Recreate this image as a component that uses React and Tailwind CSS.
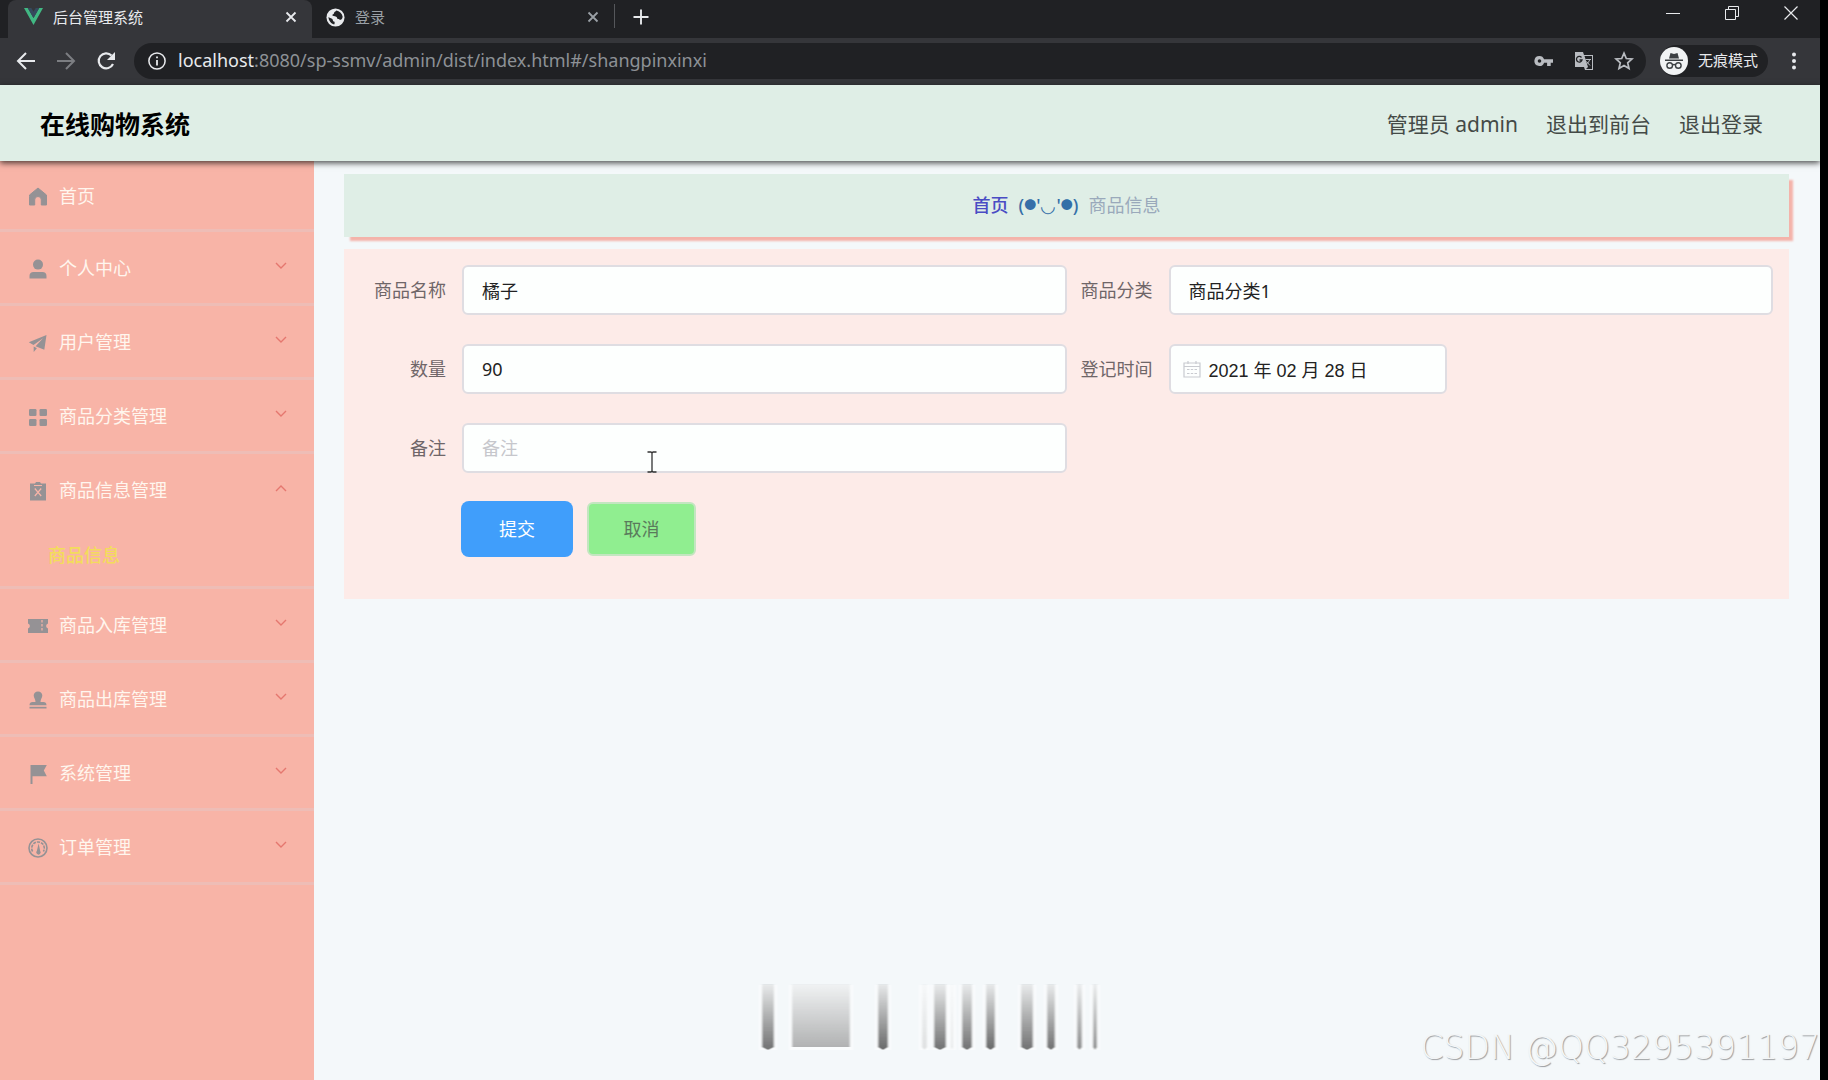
import React from "react";

const Icon = ({ children, className = "size-5", view = "0 0 20 20" }) => (
  <svg viewBox={view} className={`shrink-0 ${className}`} fill="currentColor" aria-hidden="true">
    {children}
  </svg>
);

const icons = {
  home: <path d="M10 2 1.500 9v1.500V19h5.200v-5.200a3.300 3.300 0 0 1 6.600 0V19h5.200V9z" stroke="currentColor" strokeWidth="1" strokeLinejoin="round" />,
  user: (
    <>
      <circle cx="10" cy="5.600" r="5" />
      <path d="M1.500 19.500v-2.500c0-2.500 1.500-4 4-4h9c2.500 0 4 1.500 4 4v2.500z" />
    </>
  ),
  send: (
    <>
      <path d="M18.500 2 .8 9.300l4.700 2.600L15 5.300l-7.400 8 8.700 3.400z" />
      <path d="M5.700 13.500v5.600l3.200-3.900z" />
    </>
  ),
  grid: (
    <>
      <rect x="1" y="2" width="7.500" height="7" rx="1.200" />
      <rect x="11.500" y="2" width="7.500" height="7" rx="1.200" />
      <rect x="1" y="12" width="7.500" height="7" rx="1.200" />
      <rect x="11.500" y="12" width="7.500" height="7" rx="1.200" />
    </>
  ),
  clip: (
    <>
      <path d="M2 2.500h5L8 1h4l1 1.500h5V19.500H2z" />
      <path d="m6.800 7.500 6.400 7.500m0-7.500L6.800 15M6 4.500h8" stroke="#f8b4a7" strokeWidth="1.200" fill="none" />
    </>
  ),
  ticket: (
    <>
      <path d="M0 3h20v4.500a2.600 2.600 0 0 0 0 5V17H0v-4.500a2.600 2.600 0 0 0 0-5z" />
      <path d="M14 4v12" stroke="#f8b4a7" strokeWidth="1.200" strokeDasharray="2.500 1.500" />
    </>
  ),
  stamp: (
    <>
      <path d="M10 1.500c2.700 0 4.300 1.900 4.300 4.100 0 2.300-1.800 3.600-1.800 6.400h3c1.800 0 3 1.100 3 3.200h-17c0-2.100 1.200-3.200 3-3.200h3c0-2.800-1.800-4.100-1.800-6.400 0-2.200 1.600-4.100 4.300-4.100z" />
      <rect x="1.500" y="16.800" width="17" height="1.700" />
    </>
  ),
  flag: <path d="M2.500 1h16.300l-3 5.500 3 5.800H4.500V20h-2z" />,
  gauge: (
    <>
      <circle cx="10" cy="10" r="9" fill="none" stroke="currentColor" strokeWidth="1.600" />
      <path d="M4.600 13.500a6.300 6.300 0 1 1 10.800 0" fill="none" stroke="currentColor" strokeWidth="1.600" strokeDasharray="3 1" />
      <path d="M10.600 5.500 12.200 13a2.200 2.200 0 1 1-3.300-.2z" />
    </>
  ),
};

const menu = [
  { icon: "user", label: "个人中心" },
  { icon: "send", label: "用户管理" },
  { icon: "grid", label: "商品分类管理" },
  { icon: "clip", label: "商品信息管理", child: "商品信息" },
  { icon: "ticket", label: "商品入库管理" },
  { icon: "stamp", label: "商品出库管理" },
  { icon: "flag", label: "系统管理" },
  { icon: "gauge", label: "订单管理" },
];

function Close({ className }) {
  return (
    <svg viewBox="0 0 12 12" className={className} stroke="currentColor" strokeWidth="1.800" aria-hidden="true">
      <path d="m1.500 1.500 9 9m0-9-9 9" />
    </svg>
  );
}

function BrowserBar() {
  return (
    <div className="bg-[#202124] text-[#e8eaed]">
      <div className="flex h-[38px] items-stretch pl-2">
        <div className="flex w-[304px] items-center rounded-t-lg bg-[#35363a] pr-3.5 pl-4 pb-1">
          <svg viewBox="0 0 20 18" className="w-[19px]" aria-hidden="true">
            <path d="M0 0h4l6 10.500L16 0h4L10 18z" fill="#41b883" />
            <path d="M4 0h3.700L10 4l2.300-4H16l-6 10.500z" fill="#35495e" />
          </svg>
          <span className="ml-2.5 text-[15px]">后台管理系统</span>
          <button aria-label="关闭标签页" className="ml-auto">
            <Close className="size-3.5 p-px" />
          </button>
        </div>
        <div className="flex w-[302px] items-center pr-3.5 pl-3.5 pb-1 text-[#9aa0a6]">
          <svg viewBox="0 0 20 20" className="size-[19px]" aria-hidden="true">
            <circle cx="10" cy="10" r="9.500" fill="#e8eaed" />
            <path d="M11 2.500c-1 1.500-2.500 1.300-2.500 2.700 0 1.500-1.800 1-1.800 2.500 0 1 2.500.8 4 1.500 1.400.7.600 2.300 2 2.300s1.500 1 3 .8c1-.2 1.800-2 1.800-3.300-.7-3.500-3.500-6-6.500-6.500zM2.600 9.500c.2 4 2.600 7 6 7.800.8-1 .4-2 .4-2.800-1.700 0-1.700-1.300-2-2.300-.4-1.300-3-1.200-4.400-2.700z" fill="#202124" />
          </svg>
          <span className="ml-2.5 text-[15px]">登录</span>
          <button aria-label="关闭标签页" className="ml-auto">
            <Close className="size-3.5 p-px" />
          </button>
        </div>
        <span className="mt-1 h-6 w-px bg-[#55575b]" />
        <button aria-label="新建标签页" className="ml-4 pb-1">
          <svg viewBox="0 0 16 16" className="size-5" stroke="currentColor" strokeWidth="1.500" aria-hidden="true">
            <path d="M8 2v12M2 8h12" />
          </svg>
        </button>
        <div className="mr-[22px] ml-auto flex items-center gap-[45px] pb-3">
          <button aria-label="最小化">
            <svg viewBox="0 0 14 14" className="size-3.5" stroke="currentColor" aria-hidden="true"><path d="M0 7.500h14" /></svg>
          </button>
          <button aria-label="还原">
            <svg viewBox="0 0 14 14" className="size-3.5" stroke="currentColor" fill="none" aria-hidden="true"><path d="M.5 3.500h10v10H.5zM3.500 3V.5h10v10H11" /></svg>
          </button>
          <button aria-label="关闭">
            <svg viewBox="0 0 14 14" className="size-3.5" stroke="currentColor" strokeWidth="1.200" aria-hidden="true"><path d="m.5.5 13 13m0-13-13 13" /></svg>
          </button>
        </div>
      </div>
      <div className="flex h-[47px] items-center bg-[#35363a] pr-4 pb-0.5 pl-4">
        <button aria-label="后退">
          <svg viewBox="0 0 20 20" className="size-5" stroke="currentColor" strokeWidth="2" fill="none" aria-hidden="true"><path d="M19 10H2m8-8-8 8 8 8" /></svg>
        </button>
        <button aria-label="前进" className="ml-5 text-[#7c7e82]">
          <svg viewBox="0 0 20 20" className="size-5" stroke="currentColor" strokeWidth="2" fill="none" aria-hidden="true"><path d="M1 10h17m-8-8 8 8-8 8" /></svg>
        </button>
        <button aria-label="刷新" className="ml-5">
          <svg viewBox="0 0 20 20" className="size-5" aria-hidden="true"><path d="M17 13a7.500 7.500 0 1 1-1.500-8.500" stroke="currentColor" strokeWidth="2.200" fill="none" /><path d="M19 1v8h-8z" fill="currentColor" /></svg>
        </button>
        <div className="ml-[18px] flex h-9 flex-1 items-center rounded-full bg-[#202124] pr-3 pl-3.5">
          <svg viewBox="0 0 20 20" className="size-[18px]" aria-hidden="true"><circle cx="10" cy="10" r="9" fill="none" stroke="currentColor" strokeWidth="1.700" /><path d="M9 9h2v6H9zM9 5h2v2H9z" fill="currentColor" /></svg>
          <div className="ml-3 text-[18px] text-[#8d9196]">
            <span className="text-[#e8eaed]">localhost</span>:8080/sp-ssmv/admin/dist/index.html#/shangpinxinxi
          </div>
          <div className="ml-auto flex items-center gap-5 text-[#b9bcc1]">
            <button aria-label="密码">
              <Icon className="size-5"><path fillRule="evenodd" d="M5.500 5a5 5 0 1 0 4.600 6.700h3v3.300h3.600v-3.300H19V8.300h-8.900A5 5 0 0 0 5.500 5zm0 3.200a1.800 1.800 0 1 1 0 3.600 1.800 1.800 0 0 1 0-3.600z" /></Icon>
            </button>
            <button aria-label="翻译">
              <Icon className="size-5">
                <path d="M1 1h8l1 3h9v15H11l-1-3H1z" />
                <path d="M10.500 5H18v13h-6l2-2z" fill="#202124" />
                <path d="M7.500 6.500A2.800 2.800 0 1 0 8 9H5.500" stroke="#202124" strokeWidth="1.300" fill="none" />
                <path d="M11.500 8.500H17m-1.300 0c-.4 2-2 3.800-3.200 4.500m0-2.500 3.500 4" stroke="currentColor" fill="none" />
              </Icon>
            </button>
            <button aria-label="收藏">
              <Icon className="size-5"><path d="m10 2.200 2.300 5.300 5.700.5-4.300 3.800 1.300 5.700-5-3-5 3 1.300-5.700L2 8l5.700-.5z" fill="none" stroke="currentColor" strokeWidth="1.700" /></Icon>
            </button>
          </div>
        </div>
        <div className="ml-3.5 flex h-8 items-center rounded-full bg-[#202124] pr-2.5">
          <svg viewBox="0 0 28 28" className="size-7" aria-hidden="true">
            <circle cx="14" cy="14" r="14" fill="#f1f3f4" />
            <path d="M5 12.500h18v1.500H5zM9 11.500l1.500-5.500 3.500 1 3.500-1 1.500 5.500z" fill="#3c4043" />
            <g fill="none" stroke="#3c4043" strokeWidth="1.400"><circle cx="9.700" cy="18.500" r="2.800" /><circle cx="18.300" cy="18.500" r="2.800" /><path d="M12.500 18q1.500-1 3 0" /></g>
          </svg>
          <span className="ml-2.5 text-[15px]">无痕模式</span>
        </div>
        <button aria-label="菜单" className="ml-4">
          <Icon className="size-5"><circle cx="10" cy="3.500" r="2" /><circle cx="10" cy="10" r="2" /><circle cx="10" cy="16.500" r="2" /></Icon>
        </button>
      </div>
    </div>
  );
}

function Chevron({ up }) {
  return (
    <svg viewBox="0 0 12 8" className="mb-1.5 ml-auto w-3" fill="none" stroke="#e5776f" strokeWidth="1.400" aria-hidden="true">
      <path d={up ? "M1 7l5-5 5 5" : "M1 1l5 5 5-5"} />
    </svg>
  );
}

function Sidebar() {
  return (
    <nav className="w-[314px] shrink-0 bg-[#f8b4a7] text-[18px] text-[#fff6ee]">
      <ul>
        <li className="border-b-3 border-[#eebdb6]">
          <a href="#/" className="flex h-[68px] items-center gap-[11px] pt-0.5 pl-7">
            <span className="text-[#959295]"><Icon>{icons.home}</Icon></span>
            首页
          </a>
        </li>
        {menu.map((m) => (
          <li key={m.label} className="border-b-3 border-[#eebdb6]">
            <button className="flex h-[71px] w-full items-center gap-[11px] pt-0.5 pr-[27px] pl-7" aria-expanded={Boolean(m.child)}>
              <span className="text-[#959295]"><Icon>{icons[m.icon]}</Icon></span>
              {m.label}
              <Chevron up={Boolean(m.child)} />
            </button>
            {m.child && (
              <a href="#/shangpinxinxi" className="flex h-[61px] items-center pl-12 font-medium text-[#f3dc5c]">
                {m.child}
              </a>
            )}
          </li>
        ))}
      </ul>
    </nav>
  );
}

function Field({ id, label, children }) {
  return (
    <div className="flex items-center">
      <label htmlFor={id} className="w-[102px] shrink-0 pr-4 text-right text-[#6f6668]">{label}</label>
      {children}
    </div>
  );
}

const inputBox = "h-[50px] rounded-md border-2 border-[#dfdde2] bg-[#fdfffe] text-[#222]";

function ProductForm() {
  return (
    <form className="mt-3 bg-[#fdebe8] px-4 pt-4 pb-[42px] text-[18px]" onSubmit={(e) => e.preventDefault()}>
      <div className="grid grid-cols-2 gap-y-[29px]">
        <Field id="name" label="商品名称">
          <input id="name" defaultValue="橘子" className={`${inputBox} w-full px-[18px]`} />
        </Field>
        <Field id="category" label="商品分类">
          <input id="category" readOnly defaultValue="商品分类1" className={`${inputBox} w-full px-[18px]`} />
        </Field>
        <Field id="count" label="数量">
          <input id="count" defaultValue="90" className={`${inputBox} w-full px-[18px]`} />
        </Field>
        <Field id="date" label="登记时间">
          <div className={`${inputBox} flex w-[278px] items-center gap-2 pl-3`}>
            <svg viewBox="0 0 18 18" className="size-[18px] shrink-0" fill="none" stroke="#c9cbd0" strokeWidth="1.200" aria-hidden="true">
              <path d="M1 3h16v14H1zM1 6.500h16M5 1v3m8-3v3M4 9.500h2.500m1.300 0h2.400m1.300 0H14M4 13.500h2.500m1.300 0h2.400m1.300 0H14" />
            </svg>
            <input id="date" defaultValue="2021 年 02 月 28 日" className="w-full min-w-0 bg-transparent pt-1 font-['Liberation_Sans','Noto_Sans_CJK_SC',sans-serif]" />
          </div>
        </Field>
        <Field id="remark" label="备注">
          <div className="relative w-full">
            <input id="remark" placeholder="备注" className={`${inputBox} w-full px-[18px] placeholder:text-[#c6c7cc]`} />
            <svg viewBox="0 0 10 22" className="pointer-events-none absolute top-7 left-[185px] h-[22px]" fill="none" stroke="#333" strokeWidth="1.300" aria-hidden="true">
              <path d="M.5 1H4l1 1 1-1h3.500M5 2v18M.5 21H4l1-1 1 1h3.500" />
            </svg>
          </div>
        </Field>
      </div>
      <div className="mt-7 ml-[101px] flex items-center gap-3.5">
        <button type="submit" className="h-14 w-28 rounded-lg bg-[#409efb] text-white">提交</button>
        <button type="button" className="h-[54px] w-[109px] rounded-md border-2 border-[#c3e6c0] bg-[#90ee90] text-[#5a7a5c]">取消</button>
      </div>
    </form>
  );
}

const bars = [
  [762, 12, 0.75], [792, 58, 0.4], [878, 10, 0.8], [922, 5, 0.15], [934, 12, 0.75], [951, 2, 0.12], [962, 10, 0.75],
  [986, 9, 0.8], [1021, 12, 0.75], [1047, 8, 0.75], [1077, 5, 0.6], [1093, 4, 0.6],
];

function Streaks() {
  return (
    <svg viewBox="755 978 350 76" className="absolute bottom-[25px] left-[441px] h-[76px] w-[350px]" aria-hidden="true">
      <defs>
        <linearGradient id="fade" x1="0" y1="0" x2="0" y2="1">
          <stop offset="0" stopColor="#444" stopOpacity="0.12" />
          <stop offset="1" stopColor="#444" />
        </linearGradient>
        <filter id="soft" x="-50%" width="200%"><feGaussianBlur stdDeviation="1.300 0.500" /></filter>
      </defs>
      {bars.map(([x, w, o]) => (
        <g key={x} filter="url(#soft)">
          <rect x={x - 3} y="984" width={w + 6} height="65" fill="#fff" opacity="0.5" />
          <path d={w > 20 ? `M${x} 983h${w}v63h${-w}z` : `M${x} 983h${w}v63l${-w / 2} 3l${-w / 2} -3z`} fill="url(#fade)" opacity={o} />
        </g>
      ))}
    </svg>
  );
}

export default function App() {
  return (
    <div className="flex min-h-screen bg-black pr-2 font-['Noto_Sans','Noto_Sans_CJK_SC',sans-serif]">
      <div className="flex min-w-0 flex-1 flex-col">
        <BrowserBar />
        <header className="relative z-10 flex h-[76px] items-center bg-[#dfeee6] pt-1 pr-[57px] pl-10 shadow-[0_2px_6px_rgba(0,0,0,0.7)]">
          <h1 className="text-[25px] font-bold text-black">在线购物系统</h1>
          <div className="ml-auto flex gap-7 text-[21px] text-[#444a47]">
            <span>管理员 admin</span>
            <button>退出到前台</button>
            <button>退出登录</button>
          </div>
        </header>
        <div className="flex flex-1">
          <Sidebar />
          <main className="relative min-w-0 flex-1 overflow-hidden bg-[#f4f8fa] pt-[13px] pr-[31px] pl-[30px]">
            <div className="flex h-[63px] items-center justify-center gap-2.5 bg-[#dfeee6] text-[18px] shadow-[5px_5px_2px_-1px_#f4b3aa]">
              <a href="#/" className="font-medium text-[#4a4cc4]">首页</a>
              <span className="flex items-center font-medium text-[#356fa8]">
                (<span className="text-[12px]">●</span>'◡'<span className="text-[12px]">●</span>)
              </span>
              <span className="text-[#9aa9bb]">商品信息</span>
            </div>
            <ProductForm />
            <Streaks />
            <div className="absolute right-0 bottom-2 font-['DejaVu_Sans',sans-serif] text-[33px] leading-12 font-extralight whitespace-nowrap text-[#f4f6f7] [text-shadow:1px_1px_1px_#9a9da0]">
              CSDN @QQ3295391197
            </div>
          </main>
        </div>
      </div>
    </div>
  );
}
